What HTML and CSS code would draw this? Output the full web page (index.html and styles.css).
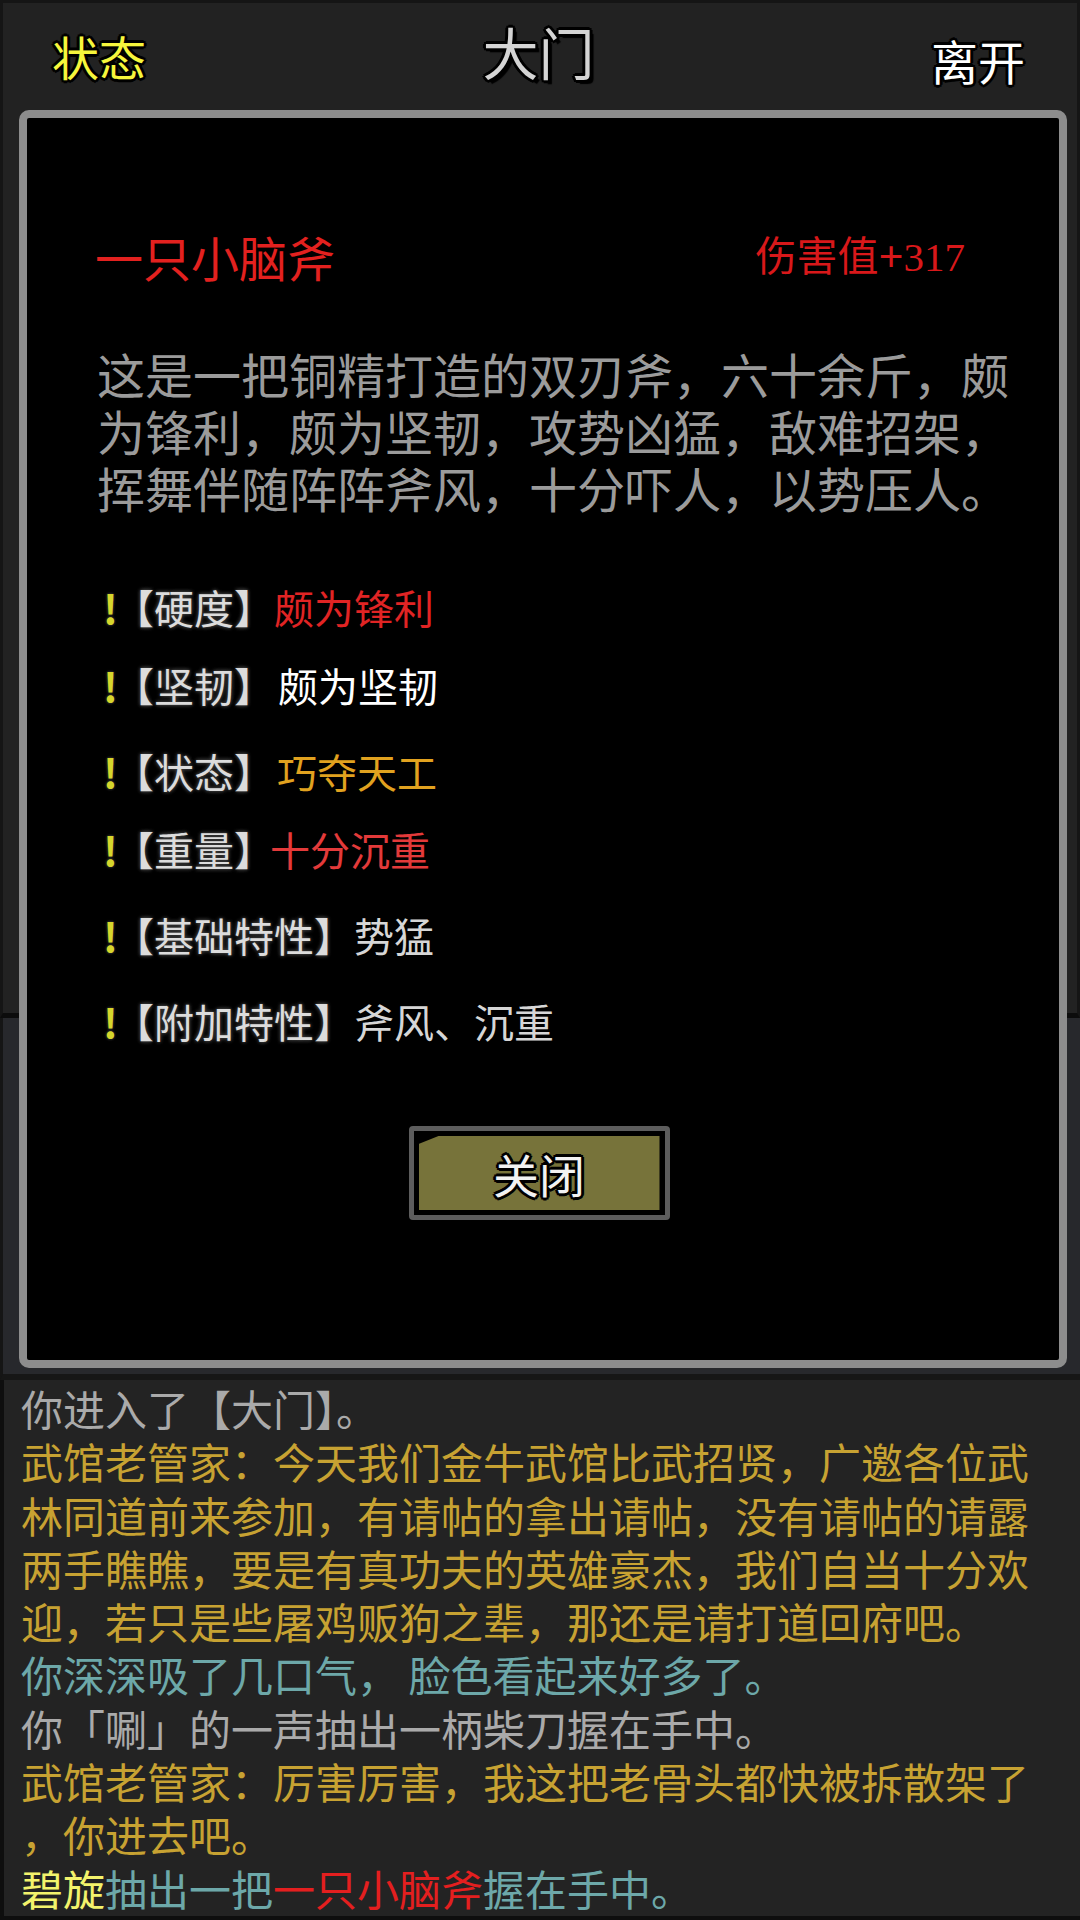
FILE: index.html
```html
<!DOCTYPE html>
<html>
<head>
<meta charset="utf-8">
<title>大门</title>
<link rel="stylesheet" href="styles.css">
</head>
<body>
<div class="app">
  <div class="scene">
    <header class="topbar">
      <span class="top-btn status">状态</span>
      <h1 class="place">大门</h1>
      <span class="top-btn leave">离开</span>
    </header>
  </div>
  <div class="lower"></div>

  <section class="log">
    <p class="gray">你进入了【大门】。</p>
    <p class="gold">武馆老管家：今天我们金牛武馆比武招贤，广邀各位武林同道前来参加，有请帖的拿出请帖，没有请帖的请露两手瞧瞧，要是有真功夫的英雄豪杰，我们自当十分欢迎，若只是些屠鸡贩狗之辈，那还是请打道回府吧。</p>
    <p class="teal">你深深吸了几口气， 脸色看起来好多了。</p>
    <p class="gray">你「唰」的一声抽出一柄柴刀握在手中。</p>
    <p class="gold">武馆老管家：厉害厉害，我这把老骨头都快被拆散架了，你进去吧。</p>
    <p><span class="name">碧旋</span><span class="teal">抽出一把</span><span class="red">一只小脑斧</span><span class="teal">握在手中。</span></p>
  </section>

  <!-- item popup -->
  <div class="modal">
    <div class="modal-body">
      <div class="item-head">
        <span class="item-name">一只小脑斧</span>
        <span class="item-dmg">伤害值<b>+</b>317</span>
      </div>
      <p class="item-desc">这是一把铜精打造的双刃斧，六十余斤，颇为锋利，颇为坚韧，攻势凶猛，敌难招架，挥舞伴随阵阵斧风，十分吓人，以势压人。</p>
      <ul class="attrs">
        <li><b class="mark">!</b><span class="label">【硬度】</span><span class="v-red">颇为锋利</span></li>
        <li><b class="mark">!</b><span class="label">【坚韧】</span><span class="v-white">颇为坚韧</span></li>
        <li class="wide"><b class="mark">!</b><span class="label">【状态】</span><span class="v-orange">巧夺天工</span></li>
        <li><b class="mark">!</b><span class="label">【重量】</span><span class="v-red2">十分沉重</span></li>
        <li class="wide"><b class="mark">!</b><span class="label">【基础特性】</span><span class="v-plain">势猛</span></li>
        <li class="wide"><b class="mark">!</b><span class="label">【附加特性】</span><span class="v-plain">斧风、沉重</span></li>
      </ul>
    </div>
    <div class="modal-foot">
      <button type="button" class="close-btn"><span class="close-inner">关闭</span></button>
    </div>
  </div>
</div>
</body>
</html>
```

FILE: styles.css
```css
body {
  margin: 0;
  background: #1a1a1a;
  font-family: "Noto Sans CJK SC", "Noto Sans", sans-serif;
}

.app {
  position: relative;
  width: 1080px;
  height: 1920px;
  overflow: hidden;
  display: flex;
  flex-direction: column;
  background: #1b1b1b;
}

.scene {
  height: 1018px;
  box-sizing: border-box;
  background: #222;
  border: 3px solid #151515;
  border-bottom: 5px solid #0c0c0c;
}

.topbar {
  height: 104px;
  display: flex;
  align-items: center;
  justify-content: space-between;
  padding: 0 52px 0 49px;
}

.top-btn {
  font-size: 47px;
  line-height: 60px;
  margin-top: 2px;
  text-shadow: 3px 0 0 #000, -3px 0 0 #000, 0 3px 0 #000, 0 -3px 0 #000,
    2px 2px 0 #000, -2px -2px 0 #000, 2px -2px 0 #000, -2px 2px 0 #000;
}

.status {
  color: #f6f63c;
}

.leave {
  color: #fff;
  margin-top: 10px;
}

.place {
  margin: -8px 0 0 0;
  font-size: 56px;
  font-weight: normal;
  line-height: 70px;
  color: #d4d4d4;
  text-shadow: 3px 0 0 #000, -3px 0 0 #000, 0 3px 0 #000, 0 -3px 0 #000,
    2px 2px 0 #000, -2px -2px 0 #000, 2px -2px 0 #000, -2px 2px 0 #000,
    4px 4px 1px #000;
}

.lower {
  height: 356px;
  background: #27282c;
  border-left: 3px solid #151515;
  border-bottom: 6px solid #161616;
}

.log {
  flex: 1;
  box-sizing: border-box;
  background: #232323;
  border-left: 4px solid #0e0e0e;
  border-bottom: 4px solid #0e0e0e;
  padding: 1px 26px 0 17px;
  font-size: 42px;
  line-height: 53.3px;
  line-break: anywhere;
}

.log p {
  margin: 0;
}

.gray { color: #aaa; }
.gold { color: #c7a232; }
.teal { color: #6da8a9; }
.name { color: #f3f36c; }
.red { color: #e41f1f; }

/* popup */
.modal {
  position: absolute;
  left: 19px;
  top: 110px;
  width: 1048px;
  height: 1258px;
  box-sizing: border-box;
  background: #000;
  border: 8px solid #8d8d8d;
  border-radius: 10px;
}

.modal-body {
  padding: 107px 30px 0 70px;
}

.item-head {
  display: flex;
  justify-content: space-between;
  align-items: center;
  padding-right: 64px;
  line-height: 60px;
}

.item-name {
  font-size: 48px;
  color: #e3211f;
  margin-left: -2px;
}

.item-dmg {
  font-family: "Liberation Serif", "Noto Sans CJK SC", serif;
  font-size: 41px;
  color: #d8181a;
  margin-top: 2px;
}

.item-dmg b {
  font-size: 44px;
}

.item-desc {
  margin: 58px 0 0 0;
  font-size: 48px;
  line-height: 57px;
  color: #9b9b9b;
}

.attrs {
  list-style: none;
  margin: 67px 0 0 0;
  padding: 0 0 0 6px;
}

.attrs li {
  display: flex;
  align-items: center;
  height: 48px;
  margin-top: 30px;
  font-size: 40px;
  line-height: 48px;
}

.attrs li:first-child {
  margin-top: 0;
}

.attrs li.wide {
  margin-top: 38px;
}

.mark {
  width: 11px;
  color: #d6d62c;
  font-weight: bold;
  text-shadow: 0 0 3px #333, 0 0 3px #333;
}

.label {
  color: #dcdcdc;
  text-shadow: 0 0 4px #3a3a3a, 0 0 4px #3a3a3a, 0 0 2px #3a3a3a;
}

.v-red { color: #e12424; }
.v-white { color: #fff; margin-left: 4px; }
.v-orange { color: #e1a21f; margin-left: 3px; }
.v-red2 { color: #e33a3a; margin-left: -4px; }
.v-plain { color: #d6d6d6; }

.modal-foot {
  display: flex;
  justify-content: center;
  margin-top: 81px;
}

.close-btn {
  margin-left: -8px;
  padding: 5px;
  background: #000;
  border: 5px solid #5d5d5d;
  border-radius: 4px;
  font-family: inherit;
}

.close-inner {
  display: flex;
  align-items: center;
  justify-content: center;
  width: 241px;
  height: 74px;
  background: #77733a;
  clip-path: polygon(0 8px, 20px 0, 100% 0, 100% 100%, 0 100%);
  font-size: 46px;
  color: #f2f2f2;
  text-shadow: 3px 0 0 #000, -3px 0 0 #000, 0 3px 0 #000, 0 -3px 0 #000,
    2px 2px 0 #000, -2px -2px 0 #000, 2px -2px 0 #000, -2px 2px 0 #000;
}
```
